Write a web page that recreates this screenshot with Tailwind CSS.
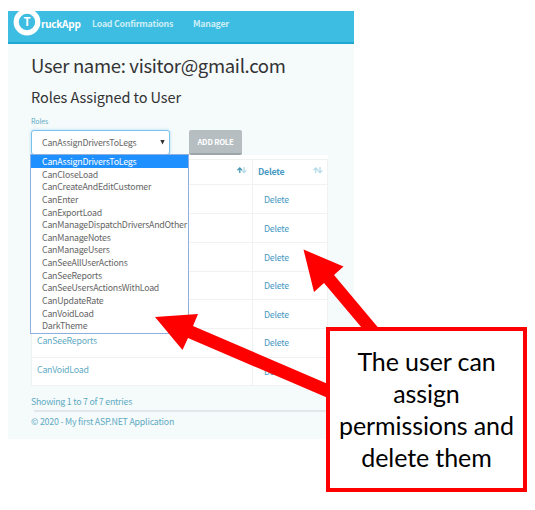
<!DOCTYPE html>
<html lang="en">
<head>
<meta charset="utf-8">
<title>TruckApp</title>
<script src="https://cdn.jsdelivr.net/npm/@tailwindcss/browser@4"></script>
</head>
<body class="relative w-[535px] h-[510px] overflow-hidden bg-white pt-[11px] pl-2 font-['Noto_Sans_CJK_SC','Open_Sans',sans-serif] text-[8.8px] tracking-[-0.23px]">
<main class="relative w-[346px] h-[428px] bg-[#f5fafb] text-[#5fabc4] whitespace-nowrap">
  <nav class="flex items-start h-[33px] overflow-hidden bg-[#3dbde1] border-b-2 border-[#1fa7d1] text-white font-bold">
    <svg class="ml-[5px] -mt-[3px] w-7 h-7 shrink-0" viewBox="0 0 28 28"><circle cx="14" cy="14" r="10.8" fill="#3dbde1" stroke="#fff" stroke-width="5.2"/><text x="14" y="18" text-anchor="middle" font-size="11.5" fill="#fff">T</text></svg>
    <span class="w-[51px] mt-[5px] leading-4 text-[10px]">ruckApp</span>
    <span class="w-[101px] mt-[5px] leading-4 text-[#cdeef7]">Load Confirmations</span>
    <span class="mt-[5px] leading-4 text-[#cdeef7]">Manager</span>
  </nav>
  <section class="pl-[23px]">
    <h1 class="pt-[6px] h-[33px] leading-[30px] text-[18.5px] tracking-[-0.32px] text-[#333]">User name: visitor@gmail.com</h1>
    <h2 class="pt-[10px] h-[34px] leading-5 text-[14.5px] tracking-[-0.1px] text-[#333]">Roles Assigned to User</h2>
    <label class="block pt-[5px] h-[19px] leading-[10px] text-[7px] tracking-[-0.1px]">Roles</label>
    <div class="flex h-[25px]">
      <div class="flex items-center justify-between w-[139px] h-[25px] pl-[10px] pr-1 rounded-[3px] border border-[#7cc3ec] bg-white text-[#666] shadow-[0_0_3px_#a5d8f3]"><span>CanAssignDriversToLegs</span><svg class="w-[5px] h-[5px]" viewBox="0 0 5 5"><path d="M.3 0H4.700L2.5 4.500Z" fill="#333"/></svg></div>
      <div class="flex items-center justify-center ml-[19px] w-[53px] h-[25px] rounded-[2px] bg-[#b6bec2] border-b-2 border-[#9ca5a9] text-white font-bold text-[7.7px]">ADD ROLE</div>
    </div>
    <div class="w-[297px] h-[231px] bg-white pt-1">
      <div class="grid grid-cols-[221px_75px] grid-rows-[25px_29px_29px_29px_28px_29px_29px_27px] border border-[#f0f2f2] *:border-b *:border-[#f0f2f2] text-[#4699c2]">
        <div class="border-r flex justify-end items-center pr-[5px]"><svg class="w-[10px] h-[7px] mb-1" viewBox="0 0 10 7" fill="none" stroke-width="1.3"><path d="M2.8 6V1M.5 3.2L2.8 1L5 3.2" stroke="#4699b5"/><path d="M7 0V5.5M5 3.6L7 5.7L9.3 3.6" stroke="#b5dce8"/></svg></div>
        <div class="flex justify-between items-center pl-[5px] pr-[5px] font-bold"><span>Delete</span><svg class="w-[10px] h-[7px] mb-1" viewBox="0 0 10 7" fill="none" stroke="#b5dce8" stroke-width="1.3"><path d="M2.8 6V1M.5 3.2L2.8 1L5 3.2M7 0V5.5M5 3.6L7 5.7L9.3 3.6"/></svg></div>
        <div class="border-r"></div><div class="flex items-center pt-px pl-[11px]">Delete</div>
        <div class="border-r"></div><div class="flex items-center pt-px pl-[11px]">Delete</div>
        <div class="border-r"></div><div class="flex items-center pt-px pl-[11px]">Delete</div>
        <div class="border-r"></div><div class="flex items-center pl-[11px]">Delete</div>
        <div class="border-r"></div><div class="flex items-center pt-px pl-[11px]">Delete</div>
        <div class="border-r flex items-center pb-[4px] pl-[5px] text-[#5fabc4]">CanSeeReports</div><div class="flex items-center pl-[11px]">Delete</div>
        <div class="border-r border-b-0! flex items-center pb-[3px] pl-[5px] text-[#5fabc4]">CanVoidLoad</div><div class="border-b-0! flex items-center pl-[11px]">Delete</div>
      </div>
    </div>
    <p class="pt-2 h-[24px] leading-4">Showing 1 to 7 of 7 entries</p>
    <div class="ml-[3px] w-[294px] h-[2px] bg-[#e3e9eb]"></div>
    <p class="pt-[2px] leading-4 tracking-[-0.2px]">© 2020 - My first ASP.NET Application</p>
  </section>
  <ul class="absolute left-[22px] top-[143px] w-[159px] h-[180px] bg-white border border-[#8eafe0] text-[#666] leading-[14.65px] *:h-[12.65px] *:pl-[11px]">
    <li class="bg-[#1e90ff] text-white">CanAssignDriversToLegs</li>
    <li>CanCloseLoad</li>
    <li>CanCreateAndEditCustomer</li>
    <li>CanEnter</li>
    <li>CanExportLoad</li>
    <li>CanManageDispatchDriversAndOther</li>
    <li>CanManageNotes</li>
    <li>CanManageUsers</li>
    <li>CanSeeAllUserActions</li>
    <li>CanSeeReports</li>
    <li>CanSeeUsersActionsWithLoad</li>
    <li>CanUpdateRate</li>
    <li>CanVoidLoad</li>
    <li>DarkTheme</li>
  </ul>
</main>
<svg class="absolute left-0 top-0 w-[535px] h-[510px]" viewBox="0 0 535 510" fill="#f00"><path d="M303.5 249.5L343.5 266.5L334 275L378.500 328H362L324 283L314 292Z"/><path d="M155 317L198 314L193 326L328 384V398L188 338L182.500 350Z"/></svg>
<aside class="absolute left-[326px] top-[327px] w-[201px] h-[165px] border-4 border-[#f00] bg-white pt-[14px] text-center font-['Lato','Open_Sans',sans-serif] text-[25px] tracking-[-0.1px] leading-8 text-black whitespace-nowrap">The user can<br>assign<br>permissions and<br>delete them</aside>
</body>
</html>
